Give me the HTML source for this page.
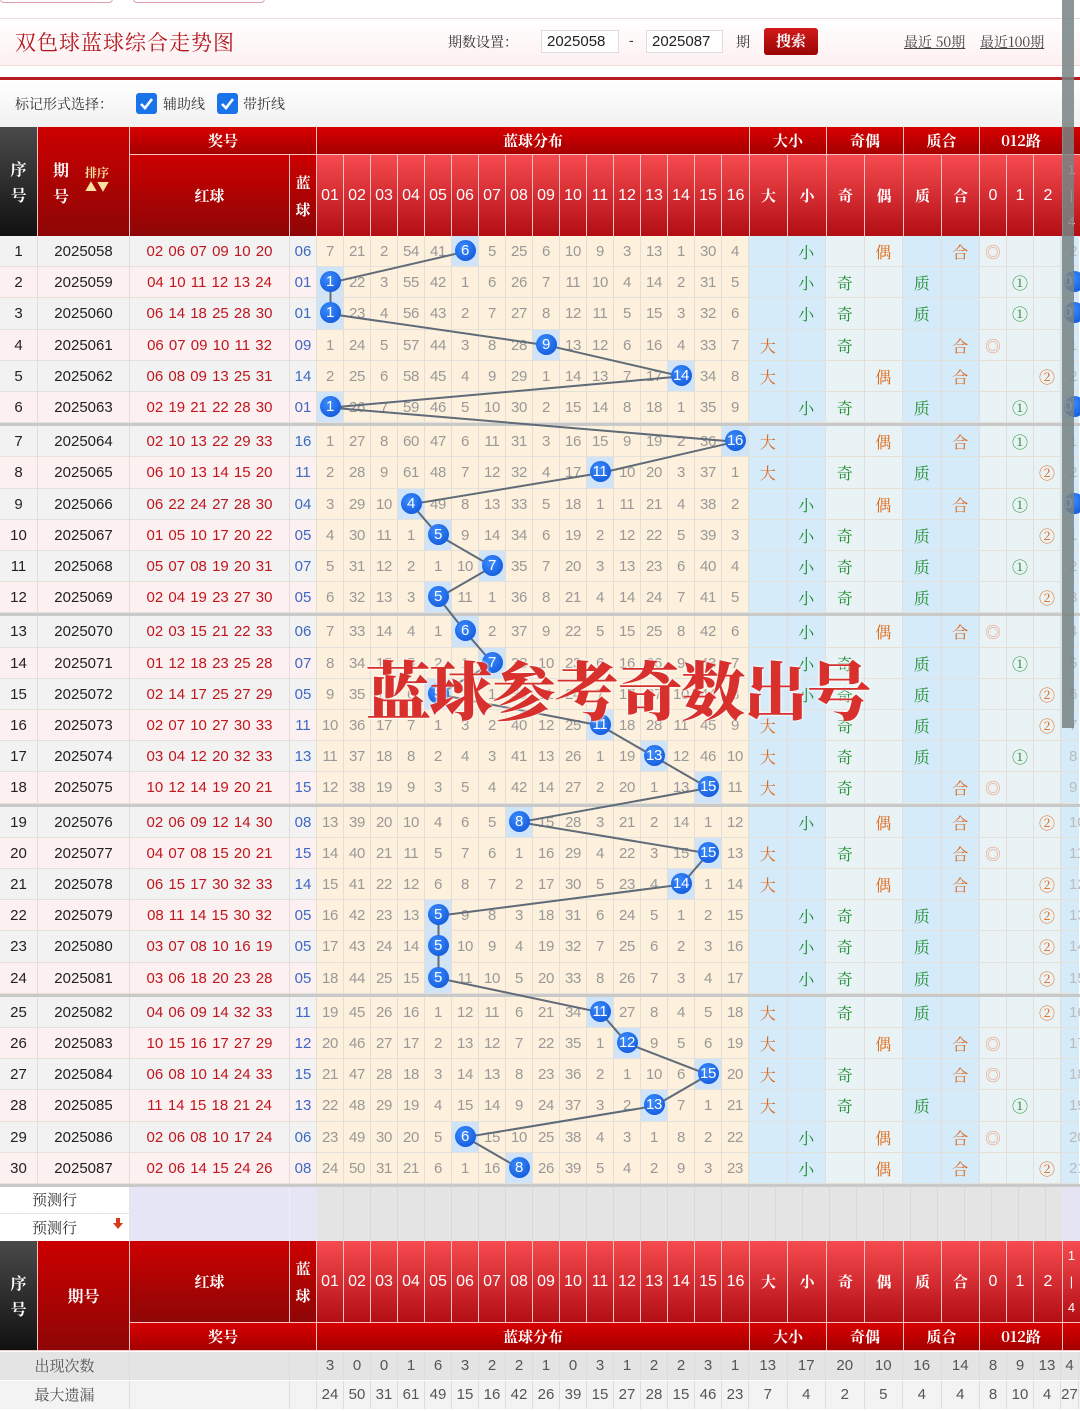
<!DOCTYPE html>
<html><head><meta charset="utf-8"><style>
*{margin:0;padding:0;box-sizing:border-box}
body{width:1080px;height:1411px;overflow:hidden;background:#fff;position:relative;font-family:"Liberation Sans","Noto Sans CJK SC",sans-serif}
.zh{font-family:"Noto Serif CJK SC","Liberation Serif",serif}
.abs{position:absolute}
.topbtn{position:absolute;top:-10px;height:13px;border:1.5px solid #e0a0a8;border-radius:4px;background:#fff}
.title{position:absolute;left:0;top:18px;width:1080px;height:48px;border-top:1px solid #f0dada;border-bottom:1px solid #f0dada;background:linear-gradient(#fff,#fdf0f1)}
.inp{position:absolute;top:30px;height:23px;border:1px solid #ddd;background:#fff;font-size:15px;line-height:21px;padding-left:5px;color:#222}
.chk{position:absolute;top:93px;width:21px;height:21px;border-radius:3px;background:#1a73e8}
.hd{position:absolute;color:#fff;text-align:center;font-weight:bold;display:flex;align-items:center;justify-content:center}
.g1{background:linear-gradient(#d80000,#a40000)}
.g2{background:linear-gradient(#cc0000,#8e0606)}
.g3{background:linear-gradient(#f64b50,#b20e14);font-weight:normal;font-family:"Liberation Sans",sans-serif;font-size:16px}
.g3z{background:linear-gradient(#f64b50,#b20e14)}
.g0{background:linear-gradient(#4a4a4a,#111)}
.r{position:absolute;left:0;width:1080px;height:31.2px;display:flex;font-size:15px;line-height:31px;text-align:center}
.r>*{flex:none;height:100%;border-right:1px solid #e2ddd6;border-bottom:1px solid #e4e0da;font-style:normal;text-decoration:none}
.c0{width:38px}.c1{width:92px;color:#222}.c2{width:160px;color:#c0161e;word-spacing:1px}.c3{width:27px;color:#3d68c4}
.A .c0,.A .c1,.A .c2,.A .c3{background:#f2f2f2}
.B .c0,.B .c1,.B .c2,.B .c3{background:#fdf0f1}
.c0{color:#222}
.r i{width:27px;background:#fdf0dc;color:#999;letter-spacing:-.3px}
.r i.k{background:#cfe4f9}
.r b{display:inline-block;width:21px;height:21px;border-radius:50%;background:radial-gradient(circle at 40% 35%,#3b8cff,#0b4fd2);color:#fff;line-height:21px;font-weight:normal;position:relative;z-index:3;vertical-align:middle;margin-top:-3px;font-size:15px}
.r em{width:38.5px;background:#d5ebfa}
.r dfn{width:38.5px;background:#e9f3f5}
.r var{width:27px;background:#e9f3f5}
.r kbd{width:18px;background:#d5ebfa;color:#bbb;font-family:"Liberation Sans",sans-serif;text-align:left;padding-left:8px;border-right:none}
.r em,.r dfn,.r var{font-family:"Noto Serif CJK SC",serif;font-size:16px}
.n{color:#1e8c2e}.o{color:#e0681a}.p{color:#e9a58c}
.sep{position:absolute;left:0;width:1080px;height:3px;background:#c9c9c9}
svg{position:absolute;left:0;top:0}
.st{position:absolute;left:0;width:1080px;height:28px;display:flex;font-size:15px;line-height:28px;text-align:center;color:#555}
.st>span{flex:none;border-right:1px solid #dcdcdc}
</style></head><body>

<div class="topbtn" style="left:0;width:113px"></div>
<div class="topbtn" style="left:133px;width:132px"></div>

<div class="title"></div>
<div class="abs zh" style="left:15px;top:27px;font-size:21px;color:#b3171d;letter-spacing:1px">双色球蓝球综合走势图</div>
<div class="abs zh" style="left:448px;top:32px;font-size:14px;color:#333">期数设置：</div>
<div class="inp" style="left:541px;width:78px">2025058</div>
<div class="abs" style="left:629px;top:32px;font-size:14px;color:#333">-</div>
<div class="inp" style="left:646px;width:77px">2025087</div>
<div class="abs zh" style="left:736px;top:32px;font-size:14px;color:#333">期</div>
<div class="abs zh" style="left:764px;top:28px;width:54px;height:27px;border-radius:3px;background:linear-gradient(#d21a1a,#9a0505);color:#fff;font-weight:bold;font-size:15px;text-align:center;line-height:26px">搜索</div>
<div class="abs zh" style="left:904px;top:32px;font-size:14px;color:#444;text-decoration:underline">最近 50期</div>
<div class="abs zh" style="left:980px;top:32px;font-size:14px;color:#444;text-decoration:underline">最近100期</div>

<div class="abs" style="left:0;top:77px;width:1080px;height:3px;background:#b81c20"></div>
<div class="abs" style="left:0;top:80px;width:1080px;height:47px;background:linear-gradient(#fff,#f1f1f1)"></div>
<div class="abs zh" style="left:15px;top:94px;font-size:14px;color:#333">标记形式选择：</div>
<div class="chk" style="left:136px"><svg width="21" height="21"><path d="M5 11 L9 15 L16 6" stroke="#fff" stroke-width="2.6" fill="none"/></svg></div>
<div class="abs zh" style="left:163px;top:94px;font-size:14px;color:#333">辅助线</div>
<div class="chk" style="left:217px"><svg width="21" height="21"><path d="M5 11 L9 15 L16 6" stroke="#fff" stroke-width="2.6" fill="none"/></svg></div>
<div class="abs zh" style="left:243px;top:94px;font-size:14px;color:#333">带折线</div>

<!-- header -->
<div class="abs" style="left:0;top:127px;width:1080px;height:110px;background:#f3c3c3"></div>
<div class="hd g0 zh" style="left:0;top:127px;width:37px;height:109px;font-size:16px;line-height:26px">序<br>号</div>
<div class="hd g2 zh" style="left:38px;top:127px;width:91px;height:109px;font-size:16px;line-height:26px"><span style="position:absolute;left:15px;top:30px">期<br>号</span><span style="position:absolute;left:47px;top:39px;font-size:12px;color:#f8e0a0;line-height:14px">排序<br>▲▼</span></div>
<div class="hd g1 zh" style="left:130px;top:127px;width:186px;height:27px;font-size:15px">奖号</div>
<div class="hd g2 zh" style="left:130px;top:155px;width:159px;height:81px;font-size:15px">红球</div>
<div class="hd g2 zh" style="left:290px;top:155px;width:26px;height:81px;font-size:15px;line-height:27px">蓝<br>球</div>
<div class="hd g1 zh" style="left:317px;top:127px;width:432px;height:27px;font-size:15px">蓝球分布</div>
<div class="hd g1 zh" style="left:750px;top:127px;width:76px;height:27px;font-size:15px">大小</div>
<div class="hd g1 zh" style="left:827px;top:127px;width:76px;height:27px;font-size:15px">奇偶</div>
<div class="hd g1 zh" style="left:904px;top:127px;width:75px;height:27px;font-size:15px">质合</div>
<div class="hd g1 zh" style="left:980px;top:127px;width:82px;height:27px;font-size:15px">012路</div>
<div class="hd g1" style="left:1063px;top:127px;width:17px;height:27px"></div>
<div class="hd g3" style="left:317px;top:155px;width:26px;height:81px">01</div>
<div class="hd g3" style="left:344px;top:155px;width:26px;height:81px">02</div>
<div class="hd g3" style="left:371px;top:155px;width:26px;height:81px">03</div>
<div class="hd g3" style="left:398px;top:155px;width:26px;height:81px">04</div>
<div class="hd g3" style="left:425px;top:155px;width:26px;height:81px">05</div>
<div class="hd g3" style="left:452px;top:155px;width:26px;height:81px">06</div>
<div class="hd g3" style="left:479px;top:155px;width:26px;height:81px">07</div>
<div class="hd g3" style="left:506px;top:155px;width:26px;height:81px">08</div>
<div class="hd g3" style="left:533px;top:155px;width:26px;height:81px">09</div>
<div class="hd g3" style="left:560px;top:155px;width:26px;height:81px">10</div>
<div class="hd g3" style="left:587px;top:155px;width:26px;height:81px">11</div>
<div class="hd g3" style="left:614px;top:155px;width:26px;height:81px">12</div>
<div class="hd g3" style="left:641px;top:155px;width:26px;height:81px">13</div>
<div class="hd g3" style="left:668px;top:155px;width:26px;height:81px">14</div>
<div class="hd g3" style="left:695px;top:155px;width:26px;height:81px">15</div>
<div class="hd g3" style="left:722px;top:155px;width:27px;height:81px">16</div>
<div class="hd g3z zh" style="left:750px;top:155px;width:37px;height:81px;font-size:15px">大</div>
<div class="hd g3z zh" style="left:788px;top:155px;width:38px;height:81px;font-size:15px">小</div>
<div class="hd g3z zh" style="left:827px;top:155px;width:37px;height:81px;font-size:15px">奇</div>
<div class="hd g3z zh" style="left:865px;top:155px;width:38px;height:81px;font-size:15px">偶</div>
<div class="hd g3z zh" style="left:904px;top:155px;width:37px;height:81px;font-size:15px">质</div>
<div class="hd g3z zh" style="left:942px;top:155px;width:37px;height:81px;font-size:15px">合</div>
<div class="hd g3" style="left:980px;top:155px;width:26px;height:81px">0</div>
<div class="hd g3" style="left:1007px;top:155px;width:26px;height:81px">1</div>
<div class="hd g3" style="left:1034px;top:155px;width:28px;height:81px">2</div>
<div class="hd g3" style="left:1063px;top:155px;width:17px;height:81px;font-size:13px;line-height:26px">1<br>|<br>4</div>

<!-- rows -->
<div class="r A" style="top:236px"><span class="c0">1</span><span class="c1">2025058</span><span class="c2">02 06 07 09 10 20</span><span class="c3">06</span><i>7</i><i>21</i><i>2</i><i>54</i><i>41</i><i class="k"><b>6</b></i><i>5</i><i>25</i><i>6</i><i>10</i><i>9</i><i>3</i><i>13</i><i>1</i><i>30</i><i>4</i><em></em><em class="n">小</em><dfn></dfn><dfn class="o">偶</dfn><em></em><em class="o">合</em><var class="p">◎</var><var></var><var></var><kbd>2</kbd></div>
<div class="r B" style="top:267.2px"><span class="c0">2</span><span class="c1">2025059</span><span class="c2">04 10 11 12 13 24</span><span class="c3">01</span><i class="k"><b>1</b></i><i>22</i><i>3</i><i>55</i><i>42</i><i>1</i><i>6</i><i>26</i><i>7</i><i>11</i><i>10</i><i>4</i><i>14</i><i>2</i><i>31</i><i>5</i><em></em><em class="n">小</em><dfn class="n">奇</dfn><dfn></dfn><em class="n">质</em><em></em><var></var><var class="n">①</var><var></var><kbd><b style="margin-left:-5px">0</b></kbd></div>
<div class="r A" style="top:298.4px"><span class="c0">3</span><span class="c1">2025060</span><span class="c2">06 14 18 25 28 30</span><span class="c3">01</span><i class="k"><b>1</b></i><i>23</i><i>4</i><i>56</i><i>43</i><i>2</i><i>7</i><i>27</i><i>8</i><i>12</i><i>11</i><i>5</i><i>15</i><i>3</i><i>32</i><i>6</i><em></em><em class="n">小</em><dfn class="n">奇</dfn><dfn></dfn><em class="n">质</em><em></em><var></var><var class="n">①</var><var></var><kbd><b style="margin-left:-5px">0</b></kbd></div>
<div class="r B" style="top:329.6px"><span class="c0">4</span><span class="c1">2025061</span><span class="c2">06 07 09 10 11 32</span><span class="c3">09</span><i>1</i><i>24</i><i>5</i><i>57</i><i>44</i><i>3</i><i>8</i><i>28</i><i class="k"><b>9</b></i><i>13</i><i>12</i><i>6</i><i>16</i><i>4</i><i>33</i><i>7</i><em class="o">大</em><em></em><dfn class="n">奇</dfn><dfn></dfn><em></em><em class="o">合</em><var class="p">◎</var><var></var><var></var><kbd>1</kbd></div>
<div class="r A" style="top:360.8px"><span class="c0">5</span><span class="c1">2025062</span><span class="c2">06 08 09 13 25 31</span><span class="c3">14</span><i>2</i><i>25</i><i>6</i><i>58</i><i>45</i><i>4</i><i>9</i><i>29</i><i>1</i><i>14</i><i>13</i><i>7</i><i>17</i><i class="k"><b>14</b></i><i>34</i><i>8</i><em class="o">大</em><em></em><dfn></dfn><dfn class="o">偶</dfn><em></em><em class="o">合</em><var></var><var></var><var class="o">②</var><kbd>2</kbd></div>
<div class="r B" style="top:392px"><span class="c0">6</span><span class="c1">2025063</span><span class="c2">02 19 21 22 28 30</span><span class="c3">01</span><i class="k"><b>1</b></i><i>26</i><i>7</i><i>59</i><i>46</i><i>5</i><i>10</i><i>30</i><i>2</i><i>15</i><i>14</i><i>8</i><i>18</i><i>1</i><i>35</i><i>9</i><em></em><em class="n">小</em><dfn class="n">奇</dfn><dfn></dfn><em class="n">质</em><em></em><var></var><var class="n">①</var><var></var><kbd><b style="margin-left:-5px">0</b></kbd></div>
<div class="sep" style="top:423.2px"></div>
<div class="r A" style="top:426.2px"><span class="c0">7</span><span class="c1">2025064</span><span class="c2">02 10 13 22 29 33</span><span class="c3">16</span><i>1</i><i>27</i><i>8</i><i>60</i><i>47</i><i>6</i><i>11</i><i>31</i><i>3</i><i>16</i><i>15</i><i>9</i><i>19</i><i>2</i><i>36</i><i class="k"><b>16</b></i><em class="o">大</em><em></em><dfn></dfn><dfn class="o">偶</dfn><em></em><em class="o">合</em><var></var><var class="n">①</var><var></var><kbd>1</kbd></div>
<div class="r B" style="top:457.4px"><span class="c0">8</span><span class="c1">2025065</span><span class="c2">06 10 13 14 15 20</span><span class="c3">11</span><i>2</i><i>28</i><i>9</i><i>61</i><i>48</i><i>7</i><i>12</i><i>32</i><i>4</i><i>17</i><i class="k"><b>11</b></i><i>10</i><i>20</i><i>3</i><i>37</i><i>1</i><em class="o">大</em><em></em><dfn class="n">奇</dfn><dfn></dfn><em class="n">质</em><em></em><var></var><var></var><var class="o">②</var><kbd>2</kbd></div>
<div class="r A" style="top:488.6px"><span class="c0">9</span><span class="c1">2025066</span><span class="c2">06 22 24 27 28 30</span><span class="c3">04</span><i>3</i><i>29</i><i>10</i><i class="k"><b>4</b></i><i>49</i><i>8</i><i>13</i><i>33</i><i>5</i><i>18</i><i>1</i><i>11</i><i>21</i><i>4</i><i>38</i><i>2</i><em></em><em class="n">小</em><dfn></dfn><dfn class="o">偶</dfn><em></em><em class="o">合</em><var></var><var class="n">①</var><var></var><kbd><b style="margin-left:-5px">0</b></kbd></div>
<div class="r B" style="top:519.8px"><span class="c0">10</span><span class="c1">2025067</span><span class="c2">01 05 10 17 20 22</span><span class="c3">05</span><i>4</i><i>30</i><i>11</i><i>1</i><i class="k"><b>5</b></i><i>9</i><i>14</i><i>34</i><i>6</i><i>19</i><i>2</i><i>12</i><i>22</i><i>5</i><i>39</i><i>3</i><em></em><em class="n">小</em><dfn class="n">奇</dfn><dfn></dfn><em class="n">质</em><em></em><var></var><var></var><var class="o">②</var><kbd>1</kbd></div>
<div class="r A" style="top:551px"><span class="c0">11</span><span class="c1">2025068</span><span class="c2">05 07 08 19 20 31</span><span class="c3">07</span><i>5</i><i>31</i><i>12</i><i>2</i><i>1</i><i>10</i><i class="k"><b>7</b></i><i>35</i><i>7</i><i>20</i><i>3</i><i>13</i><i>23</i><i>6</i><i>40</i><i>4</i><em></em><em class="n">小</em><dfn class="n">奇</dfn><dfn></dfn><em class="n">质</em><em></em><var></var><var class="n">①</var><var></var><kbd>2</kbd></div>
<div class="r B" style="top:582.2px"><span class="c0">12</span><span class="c1">2025069</span><span class="c2">02 04 19 23 27 30</span><span class="c3">05</span><i>6</i><i>32</i><i>13</i><i>3</i><i class="k"><b>5</b></i><i>11</i><i>1</i><i>36</i><i>8</i><i>21</i><i>4</i><i>14</i><i>24</i><i>7</i><i>41</i><i>5</i><em></em><em class="n">小</em><dfn class="n">奇</dfn><dfn></dfn><em class="n">质</em><em></em><var></var><var></var><var class="o">②</var><kbd>3</kbd></div>
<div class="sep" style="top:613.4px"></div>
<div class="r A" style="top:616.4px"><span class="c0">13</span><span class="c1">2025070</span><span class="c2">02 03 15 21 22 33</span><span class="c3">06</span><i>7</i><i>33</i><i>14</i><i>4</i><i>1</i><i class="k"><b>6</b></i><i>2</i><i>37</i><i>9</i><i>22</i><i>5</i><i>15</i><i>25</i><i>8</i><i>42</i><i>6</i><em></em><em class="n">小</em><dfn></dfn><dfn class="o">偶</dfn><em></em><em class="o">合</em><var class="p">◎</var><var></var><var></var><kbd>4</kbd></div>
<div class="r B" style="top:647.6px"><span class="c0">14</span><span class="c1">2025071</span><span class="c2">01 12 18 23 25 28</span><span class="c3">07</span><i>8</i><i>34</i><i>15</i><i>5</i><i>2</i><i>1</i><i class="k"><b>7</b></i><i>38</i><i>10</i><i>23</i><i>6</i><i>16</i><i>26</i><i>9</i><i>43</i><i>7</i><em></em><em class="n">小</em><dfn class="n">奇</dfn><dfn></dfn><em class="n">质</em><em></em><var></var><var class="n">①</var><var></var><kbd>5</kbd></div>
<div class="r A" style="top:678.8px"><span class="c0">15</span><span class="c1">2025072</span><span class="c2">02 14 17 25 27 29</span><span class="c3">05</span><i>9</i><i>35</i><i>16</i><i>6</i><i class="k"><b>5</b></i><i>2</i><i>1</i><i>39</i><i>11</i><i>24</i><i>7</i><i>17</i><i>27</i><i>10</i><i>44</i><i>8</i><em></em><em class="n">小</em><dfn class="n">奇</dfn><dfn></dfn><em class="n">质</em><em></em><var></var><var></var><var class="o">②</var><kbd>6</kbd></div>
<div class="r B" style="top:710px"><span class="c0">16</span><span class="c1">2025073</span><span class="c2">02 07 10 27 30 33</span><span class="c3">11</span><i>10</i><i>36</i><i>17</i><i>7</i><i>1</i><i>3</i><i>2</i><i>40</i><i>12</i><i>25</i><i class="k"><b>11</b></i><i>18</i><i>28</i><i>11</i><i>45</i><i>9</i><em class="o">大</em><em></em><dfn class="n">奇</dfn><dfn></dfn><em class="n">质</em><em></em><var></var><var></var><var class="o">②</var><kbd>7</kbd></div>
<div class="r A" style="top:741.2px"><span class="c0">17</span><span class="c1">2025074</span><span class="c2">03 04 12 20 32 33</span><span class="c3">13</span><i>11</i><i>37</i><i>18</i><i>8</i><i>2</i><i>4</i><i>3</i><i>41</i><i>13</i><i>26</i><i>1</i><i>19</i><i class="k"><b>13</b></i><i>12</i><i>46</i><i>10</i><em class="o">大</em><em></em><dfn class="n">奇</dfn><dfn></dfn><em class="n">质</em><em></em><var></var><var class="n">①</var><var></var><kbd>8</kbd></div>
<div class="r B" style="top:772.4px"><span class="c0">18</span><span class="c1">2025075</span><span class="c2">10 12 14 19 20 21</span><span class="c3">15</span><i>12</i><i>38</i><i>19</i><i>9</i><i>3</i><i>5</i><i>4</i><i>42</i><i>14</i><i>27</i><i>2</i><i>20</i><i>1</i><i>13</i><i class="k"><b>15</b></i><i>11</i><em class="o">大</em><em></em><dfn class="n">奇</dfn><dfn></dfn><em></em><em class="o">合</em><var class="p">◎</var><var></var><var></var><kbd>9</kbd></div>
<div class="sep" style="top:803.6px"></div>
<div class="r A" style="top:806.6px"><span class="c0">19</span><span class="c1">2025076</span><span class="c2">02 06 09 12 14 30</span><span class="c3">08</span><i>13</i><i>39</i><i>20</i><i>10</i><i>4</i><i>6</i><i>5</i><i class="k"><b>8</b></i><i>15</i><i>28</i><i>3</i><i>21</i><i>2</i><i>14</i><i>1</i><i>12</i><em></em><em class="n">小</em><dfn></dfn><dfn class="o">偶</dfn><em></em><em class="o">合</em><var></var><var></var><var class="o">②</var><kbd>10</kbd></div>
<div class="r B" style="top:837.8px"><span class="c0">20</span><span class="c1">2025077</span><span class="c2">04 07 08 15 20 21</span><span class="c3">15</span><i>14</i><i>40</i><i>21</i><i>11</i><i>5</i><i>7</i><i>6</i><i>1</i><i>16</i><i>29</i><i>4</i><i>22</i><i>3</i><i>15</i><i class="k"><b>15</b></i><i>13</i><em class="o">大</em><em></em><dfn class="n">奇</dfn><dfn></dfn><em></em><em class="o">合</em><var class="p">◎</var><var></var><var></var><kbd>11</kbd></div>
<div class="r A" style="top:869px"><span class="c0">21</span><span class="c1">2025078</span><span class="c2">06 15 17 30 32 33</span><span class="c3">14</span><i>15</i><i>41</i><i>22</i><i>12</i><i>6</i><i>8</i><i>7</i><i>2</i><i>17</i><i>30</i><i>5</i><i>23</i><i>4</i><i class="k"><b>14</b></i><i>1</i><i>14</i><em class="o">大</em><em></em><dfn></dfn><dfn class="o">偶</dfn><em></em><em class="o">合</em><var></var><var></var><var class="o">②</var><kbd>12</kbd></div>
<div class="r B" style="top:900.2px"><span class="c0">22</span><span class="c1">2025079</span><span class="c2">08 11 14 15 30 32</span><span class="c3">05</span><i>16</i><i>42</i><i>23</i><i>13</i><i class="k"><b>5</b></i><i>9</i><i>8</i><i>3</i><i>18</i><i>31</i><i>6</i><i>24</i><i>5</i><i>1</i><i>2</i><i>15</i><em></em><em class="n">小</em><dfn class="n">奇</dfn><dfn></dfn><em class="n">质</em><em></em><var></var><var></var><var class="o">②</var><kbd>13</kbd></div>
<div class="r A" style="top:931.4px"><span class="c0">23</span><span class="c1">2025080</span><span class="c2">03 07 08 10 16 19</span><span class="c3">05</span><i>17</i><i>43</i><i>24</i><i>14</i><i class="k"><b>5</b></i><i>10</i><i>9</i><i>4</i><i>19</i><i>32</i><i>7</i><i>25</i><i>6</i><i>2</i><i>3</i><i>16</i><em></em><em class="n">小</em><dfn class="n">奇</dfn><dfn></dfn><em class="n">质</em><em></em><var></var><var></var><var class="o">②</var><kbd>14</kbd></div>
<div class="r B" style="top:962.6px"><span class="c0">24</span><span class="c1">2025081</span><span class="c2">03 06 18 20 23 28</span><span class="c3">05</span><i>18</i><i>44</i><i>25</i><i>15</i><i class="k"><b>5</b></i><i>11</i><i>10</i><i>5</i><i>20</i><i>33</i><i>8</i><i>26</i><i>7</i><i>3</i><i>4</i><i>17</i><em></em><em class="n">小</em><dfn class="n">奇</dfn><dfn></dfn><em class="n">质</em><em></em><var></var><var></var><var class="o">②</var><kbd>15</kbd></div>
<div class="sep" style="top:993.8px"></div>
<div class="r A" style="top:996.8px"><span class="c0">25</span><span class="c1">2025082</span><span class="c2">04 06 09 14 32 33</span><span class="c3">11</span><i>19</i><i>45</i><i>26</i><i>16</i><i>1</i><i>12</i><i>11</i><i>6</i><i>21</i><i>34</i><i class="k"><b>11</b></i><i>27</i><i>8</i><i>4</i><i>5</i><i>18</i><em class="o">大</em><em></em><dfn class="n">奇</dfn><dfn></dfn><em class="n">质</em><em></em><var></var><var></var><var class="o">②</var><kbd>16</kbd></div>
<div class="r B" style="top:1028px"><span class="c0">26</span><span class="c1">2025083</span><span class="c2">10 15 16 17 27 29</span><span class="c3">12</span><i>20</i><i>46</i><i>27</i><i>17</i><i>2</i><i>13</i><i>12</i><i>7</i><i>22</i><i>35</i><i>1</i><i class="k"><b>12</b></i><i>9</i><i>5</i><i>6</i><i>19</i><em class="o">大</em><em></em><dfn></dfn><dfn class="o">偶</dfn><em></em><em class="o">合</em><var class="p">◎</var><var></var><var></var><kbd>17</kbd></div>
<div class="r A" style="top:1059.2px"><span class="c0">27</span><span class="c1">2025084</span><span class="c2">06 08 10 14 24 33</span><span class="c3">15</span><i>21</i><i>47</i><i>28</i><i>18</i><i>3</i><i>14</i><i>13</i><i>8</i><i>23</i><i>36</i><i>2</i><i>1</i><i>10</i><i>6</i><i class="k"><b>15</b></i><i>20</i><em class="o">大</em><em></em><dfn class="n">奇</dfn><dfn></dfn><em></em><em class="o">合</em><var class="p">◎</var><var></var><var></var><kbd>18</kbd></div>
<div class="r B" style="top:1090.4px"><span class="c0">28</span><span class="c1">2025085</span><span class="c2">11 14 15 18 21 24</span><span class="c3">13</span><i>22</i><i>48</i><i>29</i><i>19</i><i>4</i><i>15</i><i>14</i><i>9</i><i>24</i><i>37</i><i>3</i><i>2</i><i class="k"><b>13</b></i><i>7</i><i>1</i><i>21</i><em class="o">大</em><em></em><dfn class="n">奇</dfn><dfn></dfn><em class="n">质</em><em></em><var></var><var class="n">①</var><var></var><kbd>19</kbd></div>
<div class="r A" style="top:1121.6px"><span class="c0">29</span><span class="c1">2025086</span><span class="c2">02 06 08 10 17 24</span><span class="c3">06</span><i>23</i><i>49</i><i>30</i><i>20</i><i>5</i><i class="k"><b>6</b></i><i>15</i><i>10</i><i>25</i><i>38</i><i>4</i><i>3</i><i>1</i><i>8</i><i>2</i><i>22</i><em></em><em class="n">小</em><dfn></dfn><dfn class="o">偶</dfn><em></em><em class="o">合</em><var class="p">◎</var><var></var><var></var><kbd>20</kbd></div>
<div class="r B" style="top:1152.8px"><span class="c0">30</span><span class="c1">2025087</span><span class="c2">02 06 14 15 24 26</span><span class="c3">08</span><i>24</i><i>50</i><i>31</i><i>21</i><i>6</i><i>1</i><i>16</i><i class="k"><b>8</b></i><i>26</i><i>39</i><i>5</i><i>4</i><i>2</i><i>9</i><i>3</i><i>23</i><em></em><em class="n">小</em><dfn></dfn><dfn class="o">偶</dfn><em></em><em class="o">合</em><var></var><var></var><var class="o">②</var><kbd>21</kbd></div>
<div class="sep" style="top:1184px"></div>

<svg width="1080" height="1411" style="z-index:2;pointer-events:none"><polyline fill="none" stroke="#5f6b78" stroke-width="2" points="465.5,251.6 330.5,282.8 330.5,314 546.5,345.2 681.5,376.4 330.5,407.6 735.5,441.8 600.5,473 411.5,504.2 438.5,535.4 492.5,566.6 438.5,597.8 465.5,632 492.5,663.2 438.5,694.4 600.5,725.6 654.5,756.8 708.5,788 519.5,822.2 708.5,853.4 681.5,884.6 438.5,915.8 438.5,947 438.5,978.2 600.5,1012.4 627.5,1043.6 708.5,1074.8 654.5,1106 465.5,1137.2 519.5,1168.4"/></svg>

<!-- predict rows -->
<div class="abs" style="left:0;top:1187px;width:1080px;height:54px;background:#e4e4e4;background-image:repeating-linear-gradient(90deg,transparent 0 26px,#d8d8d8 26px 27px);background-position:317px 0"></div>
<div class="abs" style="left:0;top:1187px;width:129px;height:26px;background:#fff"></div>
<div class="abs" style="left:0;top:1214px;width:129px;height:27px;background:#fff"></div>
<div class="abs" style="left:130px;top:1187px;width:187px;height:54px;background:#e5e5f5"></div>
<div class="abs" style="left:289px;top:1187px;width:1px;height:54px;background:#f0f0f8"></div>
<div class="abs" style="left:1062px;top:1187px;width:18px;height:54px;background:#e4e4f4"></div>
<div class="abs zh" style="left:32px;top:1189px;font-size:15px;color:#333">预测行</div>
<div class="abs zh" style="left:32px;top:1217px;font-size:15px;color:#333">预测行</div>
<svg class="abs" style="left:112px;top:1218px" width="12" height="12"><path d="M4 0 H8 V5 H11 L6 11 L1 5 H4 Z" fill="#d53a1a"/></svg>

<!-- footer header -->
<div class="abs" style="left:0;top:1241px;width:1080px;height:110px;background:#f3c3c3"></div>
<div class="hd g0 zh" style="left:0;top:1241px;width:37px;height:109px;font-size:16px;line-height:26px">序<br>号</div>
<div class="hd g2 zh" style="left:38px;top:1241px;width:91px;height:109px;font-size:16px">期号</div>
<div class="hd g2 zh" style="left:130px;top:1241px;width:159px;height:81px;font-size:15px">红球</div>
<div class="hd g2 zh" style="left:290px;top:1241px;width:26px;height:81px;font-size:15px;line-height:27px">蓝<br>球</div>
<div class="hd g1 zh" style="left:130px;top:1323px;width:186px;height:27px;font-size:15px">奖号</div>
<div class="hd g1 zh" style="left:317px;top:1323px;width:432px;height:27px;font-size:15px">蓝球分布</div>
<div class="hd g1 zh" style="left:750px;top:1323px;width:76px;height:27px;font-size:15px">大小</div>
<div class="hd g1 zh" style="left:827px;top:1323px;width:76px;height:27px;font-size:15px">奇偶</div>
<div class="hd g1 zh" style="left:904px;top:1323px;width:75px;height:27px;font-size:15px">质合</div>
<div class="hd g1 zh" style="left:980px;top:1323px;width:82px;height:27px;font-size:15px">012路</div>
<div class="hd g1" style="left:1063px;top:1323px;width:17px;height:27px"></div>
<div class="hd g3" style="left:317px;top:1241px;width:26px;height:81px">01</div>
<div class="hd g3" style="left:344px;top:1241px;width:26px;height:81px">02</div>
<div class="hd g3" style="left:371px;top:1241px;width:26px;height:81px">03</div>
<div class="hd g3" style="left:398px;top:1241px;width:26px;height:81px">04</div>
<div class="hd g3" style="left:425px;top:1241px;width:26px;height:81px">05</div>
<div class="hd g3" style="left:452px;top:1241px;width:26px;height:81px">06</div>
<div class="hd g3" style="left:479px;top:1241px;width:26px;height:81px">07</div>
<div class="hd g3" style="left:506px;top:1241px;width:26px;height:81px">08</div>
<div class="hd g3" style="left:533px;top:1241px;width:26px;height:81px">09</div>
<div class="hd g3" style="left:560px;top:1241px;width:26px;height:81px">10</div>
<div class="hd g3" style="left:587px;top:1241px;width:26px;height:81px">11</div>
<div class="hd g3" style="left:614px;top:1241px;width:26px;height:81px">12</div>
<div class="hd g3" style="left:641px;top:1241px;width:26px;height:81px">13</div>
<div class="hd g3" style="left:668px;top:1241px;width:26px;height:81px">14</div>
<div class="hd g3" style="left:695px;top:1241px;width:26px;height:81px">15</div>
<div class="hd g3" style="left:722px;top:1241px;width:27px;height:81px">16</div>
<div class="hd g3z zh" style="left:750px;top:1241px;width:37px;height:81px;font-size:15px">大</div>
<div class="hd g3z zh" style="left:788px;top:1241px;width:38px;height:81px;font-size:15px">小</div>
<div class="hd g3z zh" style="left:827px;top:1241px;width:37px;height:81px;font-size:15px">奇</div>
<div class="hd g3z zh" style="left:865px;top:1241px;width:38px;height:81px;font-size:15px">偶</div>
<div class="hd g3z zh" style="left:904px;top:1241px;width:37px;height:81px;font-size:15px">质</div>
<div class="hd g3z zh" style="left:942px;top:1241px;width:37px;height:81px;font-size:15px">合</div>
<div class="hd g3" style="left:980px;top:1241px;width:26px;height:81px">0</div>
<div class="hd g3" style="left:1007px;top:1241px;width:26px;height:81px">1</div>
<div class="hd g3" style="left:1034px;top:1241px;width:28px;height:81px">2</div>
<div class="hd g3" style="left:1063px;top:1241px;width:17px;height:81px;font-size:13px;line-height:26px">1<br>|<br>4</div>

<!-- stats -->
<div class="st" style="top:1352px;background:#e4e4e4"><span class="zh" style="width:130px">出现次数</span><span style="width:160px"></span><span style="width:27px"></span><span style="width:27px">3</span><span style="width:27px">0</span><span style="width:27px">0</span><span style="width:27px">1</span><span style="width:27px">6</span><span style="width:27px">3</span><span style="width:27px">2</span><span style="width:27px">2</span><span style="width:27px">1</span><span style="width:27px">0</span><span style="width:27px">3</span><span style="width:27px">1</span><span style="width:27px">2</span><span style="width:27px">2</span><span style="width:27px">3</span><span style="width:27px">1</span><span style="width:38.5px">13</span><span style="width:38.5px">17</span><span style="width:38.5px">20</span><span style="width:38.5px">10</span><span style="width:38.5px">16</span><span style="width:38.5px">14</span><span style="width:27px">8</span><span style="width:27px">9</span><span style="width:27px">13</span><span style="width:18px">4</span></div>
<div class="st" style="top:1381px;background:#f3f3f3"><span class="zh" style="width:130px">最大遗漏</span><span style="width:160px"></span><span style="width:27px"></span><span style="width:27px">24</span><span style="width:27px">50</span><span style="width:27px">31</span><span style="width:27px">61</span><span style="width:27px">49</span><span style="width:27px">15</span><span style="width:27px">16</span><span style="width:27px">42</span><span style="width:27px">26</span><span style="width:27px">39</span><span style="width:27px">15</span><span style="width:27px">27</span><span style="width:27px">28</span><span style="width:27px">15</span><span style="width:27px">46</span><span style="width:27px">23</span><span style="width:38.5px">7</span><span style="width:38.5px">4</span><span style="width:38.5px">2</span><span style="width:38.5px">5</span><span style="width:38.5px">4</span><span style="width:38.5px">4</span><span style="width:27px">8</span><span style="width:27px">10</span><span style="width:27px">4</span><span style="width:18px">27</span></div>

<!-- scrollbar -->
<div class="abs" style="left:1062px;top:0;width:12px;height:728px;background:rgba(120,132,132,.85);z-index:5"></div>

<!-- watermark -->
<div class="abs zh" style="left:366px;top:656px;font-size:64px;line-height:1;font-weight:900;color:#d8302c;letter-spacing:-1px;z-index:6;text-shadow:0 0 3px #fff,0 0 2px #fff">蓝球参考奇数出号</div>
</body></html>
